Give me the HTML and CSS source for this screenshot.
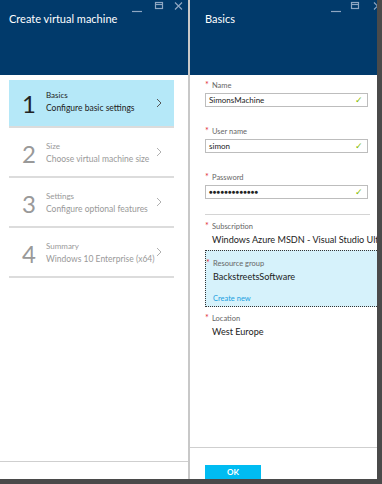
FILE: index.html
```html
<!DOCTYPE html>
<html lang="en">
<head>
    <meta charset="UTF-8">
    <meta name="viewport" content="width=device-width, initial-scale=1.0">
    <title>Create virtual machine</title>
    <link rel="stylesheet" href="styles.css">
</head>
<body>
    <div class="app">
        <div class="blade blade-left">
            <div class="blade-header">
                <h1>Create virtual machine</h1>
                <div class="win-controls">
                    <svg width="60" height="14" viewBox="0 0 60 14">
                        <path d="M6 10.5 H16" stroke="#8ea6c2" stroke-width="1.2"/>
                        <rect x="29.5" y="1.5" width="7" height="6" fill="none" stroke="#8ea6c2" stroke-width="1.2"/>
                        <path d="M29.5 3.5 H36.5" stroke="#8ea6c2" stroke-width="1.2"/>
                        <path d="M49 1.5 L56 8.5 M56 1.5 L49 8.5" stroke="#8ea6c2" stroke-width="1.2"/>
                    </svg>
                </div>
            </div>
            <div class="steps">
                <div class="step active">
                    <div class="step-num">1</div>
                    <div class="step-text">
                        <div class="step-title">Basics</div>
                        <div class="step-sub">Configure basic settings</div>
                    </div>
                    <svg class="step-arrow" width="6" height="10" viewBox="0 0 6 10"><path d="M1 1 L5 5 L1 9" fill="none" stroke="currentColor" stroke-width="1"/></svg>
                </div>
                <div class="step">
                    <div class="step-num">2</div>
                    <div class="step-text">
                        <div class="step-title">Size</div>
                        <div class="step-sub">Choose virtual machine size</div>
                    </div>
                    <svg class="step-arrow" width="6" height="10" viewBox="0 0 6 10"><path d="M1 1 L5 5 L1 9" fill="none" stroke="currentColor" stroke-width="1"/></svg>
                </div>
                <div class="step">
                    <div class="step-num">3</div>
                    <div class="step-text">
                        <div class="step-title">Settings</div>
                        <div class="step-sub">Configure optional features</div>
                    </div>
                    <svg class="step-arrow" width="6" height="10" viewBox="0 0 6 10"><path d="M1 1 L5 5 L1 9" fill="none" stroke="currentColor" stroke-width="1"/></svg>
                </div>
                <div class="step">
                    <div class="step-num">4</div>
                    <div class="step-text">
                        <div class="step-title">Summary</div>
                        <div class="step-sub">Windows 10 Enterprise (x64)</div>
                    </div>
                    <svg class="step-arrow" width="6" height="10" viewBox="0 0 6 10"><path d="M1 1 L5 5 L1 9" fill="none" stroke="currentColor" stroke-width="1"/></svg>
                </div>
            </div>
            <div class="blade-footer"></div>
        </div>

        <div class="blade blade-right">
            <div class="blade-header">
                <h1 class="indent">Basics</h1>
                <div class="win-controls">
                    <svg width="60" height="14" viewBox="0 0 60 14">
                        <path d="M6 10.5 H16" stroke="#8ea6c2" stroke-width="1.2"/>
                        <rect x="26.5" y="1.5" width="7" height="6" fill="none" stroke="#8ea6c2" stroke-width="1.2"/>
                        <path d="M26.5 3.5 H33.5" stroke="#8ea6c2" stroke-width="1.2"/>
                        <path d="M49 1.5 L56 8.5 M56 1.5 L49 8.5" stroke="#8ea6c2" stroke-width="1.2"/>
                    </svg>
                </div>
            </div>
            <div class="form">
                <div class="field">
                    <label><span class="req">*</span>Name</label>
                    <div class="input">SimonsMachine<span class="check">&#10003;</span></div>
                </div>
                <div class="field">
                    <label><span class="req">*</span>User name</label>
                    <div class="input">simon<span class="check">&#10003;</span></div>
                </div>
                <div class="field">
                    <label><span class="req">*</span>Password</label>
                    <div class="input dots">&#9679;&#9679;&#9679;&#9679;&#9679;&#9679;&#9679;&#9679;&#9679;&#9679;&#9679;&#9679;&#9679;<span class="check">&#10003;</span></div>
                </div>
                <div class="separator"></div>
                <div class="info">
                    <label><span class="req">*</span>Subscription</label>
                    <div class="value">Windows Azure MSDN - Visual Studio Ult</div>
                </div>
                <div class="info selected">
                    <label><span class="req">*</span>Resource group</label>
                    <div class="value">BackstreetsSoftware</div>
                    <a class="create-new">Create new</a>
                </div>
                <div class="info">
                    <label><span class="req">*</span>Location</label>
                    <div class="value">West Europe</div>
                </div>
            </div>
            <div class="blade-footer right-footer">
                <button type="button">OK</button>
            </div>
        </div>
    </div>
</body>
</html>
```

FILE: styles.css
```css
body {
    margin: 0;
    font-family: 'Segoe UI', Lato, 'Open Sans', sans-serif;
    background: #4a4a4a;
    width: 382px;
    height: 484px;
    overflow: hidden;
}

.app {
    display: flex;
    width: 377px;
    height: 479px;
    background: white;
}

.blade {
    display: flex;
    flex-direction: column;
    position: relative;
    min-width: 0;
}

.blade-left {
    width: 188px;
    flex-shrink: 0;
    border-right: 2px solid #c8c8c8;
}

.blade-right {
    flex: 1;
    overflow: hidden;
}

.blade-header {
    height: 75px;
    flex-shrink: 0;
    background: #013a6b;
    position: relative;
}

.blade-header h1 {
    margin: 0;
    padding: 11px 0 0 9px;
    font-size: 11px;
    font-weight: normal;
    color: white;
    line-height: 16px;
}

.blade-header h1.indent {
    padding-left: 15px;
}

.win-controls {
    position: absolute;
    top: 1px;
    right: 2px;
    line-height: 0;
}

.blade-right .win-controls {
    right: -8px;
}

.steps {
    flex: 1;
    padding: 5px 14px 0 9px;
}

.step {
    display: flex;
    align-items: center;
    height: 48px;
    border-bottom: 2px solid #dcdcdc;
    color: #999;
}

.step.active {
    height: 46px;
    background: #b5e8f8;
    color: #222;
}

.step-num {
    width: 34px;
    padding-left: 3px;
    text-align: center;
    font-size: 24px;
    font-weight: normal;
    padding-top: 2px;
}

.step.active .step-num {
    padding-top: 0;
}

.step-text {
    flex: 1;
    font-size: 8.5px;
    line-height: 13px;
    padding-top: 1px;
    white-space: nowrap;
}

.step.active .step-text {
    padding-top: 0;
    margin-top: -2px;
}

.step-title {
    font-size: 8px;
}

.step-arrow {
    margin-right: 12px;
    color: #b0b0b0;
}

.step.active .step-arrow {
    color: #555;
}

.blade-footer {
    height: 17px;
    flex-shrink: 0;
    border-top: 1px solid #cfcfcf;
}

.right-footer {
    height: 32px;
    padding: 11px 0 0 15px;
    box-sizing: border-box;
}

button {
    width: 56px;
    height: 14px;
    padding: 0;
    background: #00bcf2;
    color: white;
    border: none;
    font-family: inherit;
    font-size: 8px;
    font-weight: bold;
}

.form {
    flex: 1;
    padding: 5px 0 0 15px;
}

label {
    display: block;
    font-size: 7.5px;
    line-height: 10px;
    color: #666;
}

.req {
    color: #e0303a;
    display: inline-block;
    width: 7px;
    font-size: 9px;
}

.field {
    height: 46px;
}

.input {
    margin-top: 2px;
    width: 158px;
    height: 12px;
    border: 1px solid #bdbdbd;
    font-size: 8px;
    line-height: 12px;
    padding-left: 3px;
    color: #222;
    position: relative;
}

.dots {
    font-size: 6px;
    letter-spacing: 0.2px;
}

.check {
    position: absolute;
    right: 4px;
    top: 0;
    color: #7fba00;
    font-size: 9px;
    letter-spacing: 0;
}

.separator {
    width: 165px;
    border-top: 1px solid #d4d4d4;
    margin: -4px 0 0 0;
}

.info {
    padding: 5px 0 0 0;
    height: 30px;
    box-sizing: border-box;
}

.info .value {
    padding-left: 7px;
    font-size: 9.1px;
    line-height: 13px;
    color: #222;
    white-space: nowrap;
}

.info label {
    line-height: 12px;
}

.selected {
    height: 57px;
    margin-top: 5px;
    background: #d6f2fb;
    border: 1px dotted #333;
    border-right: none;
    padding-top: 6px;
}

.create-new {
    display: block;
    margin-top: 11px;
    padding-left: 7px;
    font-size: 7.5px;
    color: #1aa0e0;
}
```
